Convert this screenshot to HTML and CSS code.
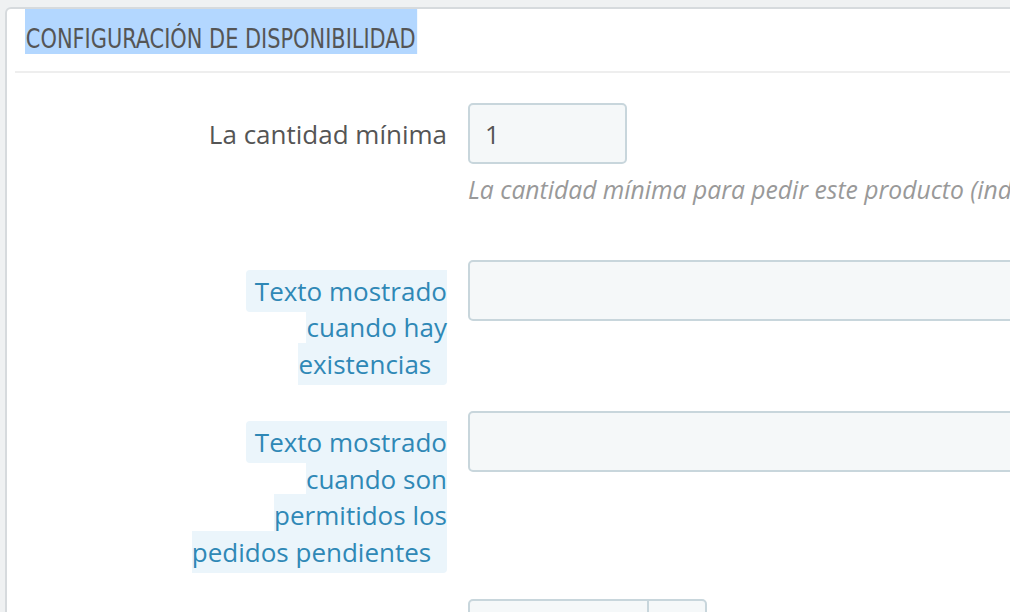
FILE: index.html
```html
<!DOCTYPE html>
<html lang="es">
<head>
    <meta charset="UTF-8">
    <meta name="viewport" content="width=device-width, initial-scale=1.0">
    <title>Configuración de disponibilidad</title>
    <link rel="stylesheet" href="styles.css">
</head>
<body>
    <div class="panel">
        <h3 class="panel-heading"><span class="selected">Configuración de disponibilidad</span></h3>

        <form class="panel-body">
            <div class="form-group">
                <label class="control-label" for="minimal_quantity">La cantidad mínima</label>
                <div class="field">
                    <input type="text" id="minimal_quantity" class="form-control fixed-width-sm" value="1">
                    <p class="help-block">La cantidad mínima para pedir este producto (indique 1 para desactivar esta funcionalidad)</p>
                </div>
            </div>

            <div class="form-group">
                <label class="control-label" for="available_now">
                    <span class="label-tooltip">Texto mostrado cuando hay existencias&nbsp;</span>
                </label>
                <div class="field">
                    <input type="text" id="available_now" class="form-control">
                </div>
            </div>

            <div class="form-group">
                <label class="control-label" for="available_later">
                    <span class="label-tooltip">Texto mostrado cuando son permitidos los pedidos pendientes&nbsp;</span>
                </label>
                <div class="field">
                    <input type="text" id="available_later" class="form-control">
                </div>
            </div>

            <div class="form-group">
                <label class="control-label" for="available_date"></label>
                <div class="field">
                    <div class="input-group">
                        <input type="text" id="available_date" class="form-control">
                        <span class="input-group-addon"></span>
                    </div>
                </div>
            </div>
        </form>
    </div>
</body>
</html>
```

FILE: styles.css
```css
html, body {
    height: 100%;
}

body {
    margin: 0;
    background-color: #eff1f2;
    font-family: "Open Sans", Arial, sans-serif;
    color: #555;
    overflow: hidden;
}

.panel {
    margin: 7px 0 0 5px;
    width: 1100px;
    height: 700px;
    background-color: #fff;
    border: 2px solid #d6dadd;
    border-radius: 6px;
}

.panel-heading {
    margin: 0 0 0 8px;
    padding: 0 0 17px 10px;
    border-bottom: 2px solid #eeeeee;
    font-family: "DejaVu Sans Condensed", "DejaVu Sans", sans-serif;
    font-stretch: condensed;
    font-weight: normal;
    font-size: 27px;
    text-transform: uppercase;
    color: #555;
}

/* the heading text is shown selected in the shot */
.selected {
    display: inline-block;
    box-sizing: border-box;
    height: 45px;
    padding: 16px 2px 0 1px;
    line-height: 28px;
    background-color: #b3d7ff;
    transform: scaleX(0.86);
    transform-origin: left top;
}

.panel-body {
    padding-top: 30px;
}

.form-group {
    display: grid;
    grid-template-columns: 440px 1fr;
    column-gap: 21px;
    align-items: start;
    margin-bottom: 29px;
}

.control-label {
    padding: 13px 0 0 180px;
    text-align: right;
    font-size: 26px;
    line-height: 36.5px;
    color: #555;
}

.label-tooltip {
    padding: 3px 9px;
    border-radius: 4px;
    background-color: #ebf5fb;
    color: #2f88b6;
}

.form-control {
    display: block;
    box-sizing: border-box;
    width: 700px;
    height: 61px;
    margin: 0;
    padding: 0 15px;
    border: 2px solid #c8d6dc;
    border-radius: 5px;
    background-color: #f5f8f9;
    font-family: "Open Sans", Arial, sans-serif;
    font-size: 25.5px;
    color: #555;
    outline: none;
}

.fixed-width-sm {
    width: 159px;
}

.help-block {
    margin: 9px 0 23px;
    font-size: 24.7px;
    line-height: 34.7px;
    font-style: italic;
    color: #999;
    white-space: nowrap;
}

.input-group {
    display: flex;
}

.input-group .form-control {
    width: 181px;
    border-radius: 5px 0 0 5px;
}

.input-group-addon {
    box-sizing: border-box;
    width: 60px;
    height: 61px;
    margin-left: -2px;
    border: 2px solid #c8d6dc;
    border-radius: 0 5px 5px 0;
    background-color: #f5f8f9;
}
```
